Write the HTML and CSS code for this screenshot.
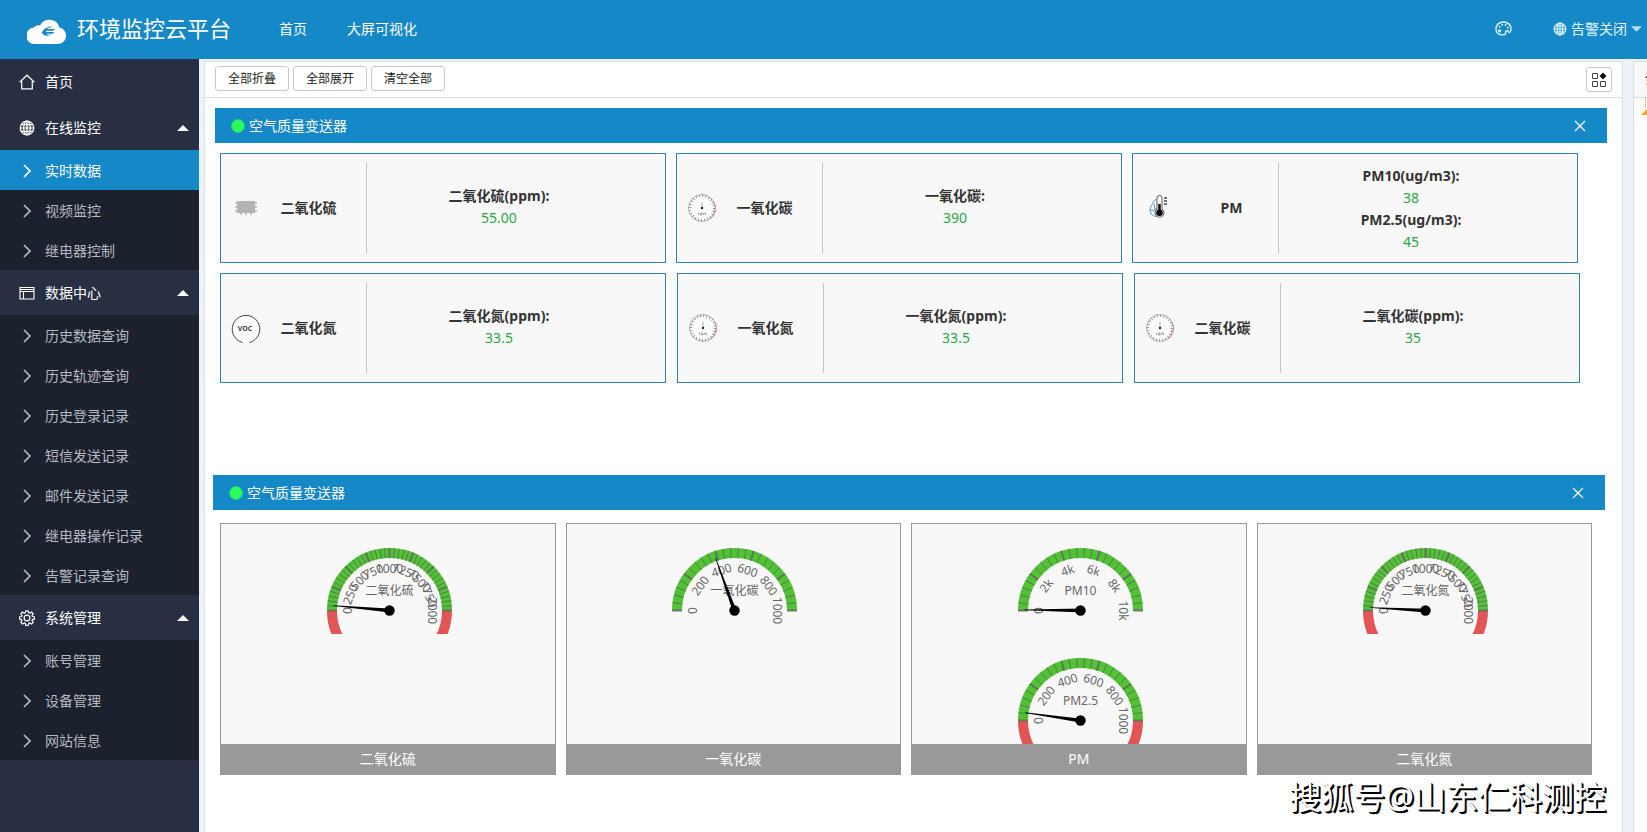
FILE: index.html
```html
<!DOCTYPE html>
<html lang="zh-CN">
<head>
<meta charset="utf-8">
<title>环境监控云平台</title>
<link rel="stylesheet" href="styles.css">
</head>
<body>
<svg class="defs" aria-hidden="true">
  <symbol id="i-chevron" viewBox="0 0 16 16"><path d="M5 2l6 6-6 6" fill="none" stroke="currentColor" stroke-width="1.7"/></symbol>
  <symbol id="i-globe" viewBox="0 0 16 16"><circle cx="8" cy="8" r="7" fill="currentColor" opacity=".15"/><g fill="none" stroke="currentColor" stroke-width="1.2"><circle cx="8" cy="8" r="6.8"/><ellipse cx="8" cy="8" rx="3.3" ry="6.8"/><path d="M8 1.200v13.600M1.200 8h13.600M2.400 4.600h11.200M2.400 11.400h11.200"/></g></symbol>
  <symbol id="i-home" viewBox="0 0 16 16"><path d="M.6 8.300L8 1.200l7.400 7.100M2.700 6.800v8h10.600v-8" fill="none" stroke="currentColor" stroke-width="1.200"/></symbol>
  <symbol id="i-table" viewBox="0 0 16 16"><path d="M1 2.500h14v11.500H1zM1 6.500h14M4.500 6.500V14M1 4.500h14" fill="none" stroke="currentColor" stroke-width="1.100"/></symbol>
  <symbol id="i-gear" viewBox="0 0 16 16"><g fill="none" stroke="currentColor" stroke-width="1.200" stroke-linejoin="round"><path d="M6.700.8h2.600l.4 2 1 .4 1.800-1.200 1.700 1.700-1.200 1.800.4 1 2 .4v2.300l-2 .4-.4 1 1.200 1.800-1.700 1.700-1.800-1.200-1 .4-.4 2H6.700l-.4-2-1-.4-1.800 1.200-1.700-1.700L3 10.600l-.4-1-2-.4V6.900l2-.4.4-1-1.200-1.800L3.500 2l1.800 1.200 1-.4z"/><circle cx="8" cy="8" r="2.900"/></g></symbol>
  <symbol id="i-close" viewBox="0 0 12 12"><path d="M1 1l10 10M11 1L1 11" fill="none" stroke="currentColor" stroke-width="1.300"/></symbol>
  <symbol id="i-caret-up" viewBox="0 0 12 6"><path d="M0 6l6-6 6 6z" fill="currentColor"/></symbol>
  <symbol id="i-dial" viewBox="0 0 30 30"><circle cx="15" cy="15" r="13.500" fill="#fcfcfc" stroke="#999" stroke-width=".8"/><circle cx="15" cy="15" r="12" fill="none" stroke="#777" stroke-width="2" stroke-dasharray=".8 2.340"/><path d="M27.500 10a13.500 13.500 0 0 1-4.500 16" fill="none" stroke="#e08080" stroke-width="1"/><path d="M15 9v6" stroke="#999" stroke-width=".8"/><circle cx="15" cy="15" r="1.200" fill="#222"/><path d="M11.500 19.500v2.500M13.500 20h1.500v2h-1.500zM16.500 22v-2h2v2" fill="none" stroke="#888" stroke-width=".7"/></symbol>
</svg>

<header class="topbar">
  <a class="brand" href="#">
    <svg class="brand-logo" viewBox="0 0 40 26" aria-hidden="true"><path d="M8 26a8 8 0 0 1-1-16.500Q9.500 6.500 13 7.500A10.500 10.500 0 0 1 32.500 9.500 8.400 8.400 0 0 1 32 26z" fill="#fff"/><path d="M15 14.500c1.500-4 6-6.500 11.500-5.500-3 .3-5.500 1-6.500 2h8l-2 1.800h-6.500l-.5 1.200h8.500l-2 1.800h-6c.5 1 2.500 1.300 5.500.7-3.500 2-9.500 1.500-10-2z" fill="#1588c8"/></svg>
    <span class="brand-name">环境监控云平台</span>
  </a>
  <nav class="topnav">
    <a href="#">首页</a>
    <a href="#">大屏可视化</a>
  </nav>
  <div class="tools">
    <button class="tool" type="button" aria-label="主题">
      <svg class="icon-palette" viewBox="0 0 18 16" aria-hidden="true"><path d="M11.500 13.600C9 15.500 1 15.500 1 8.500 1 4 4.500 1 9 1s8 3 8 7.500c0 4-2 4.500-3 2.500-1.200-2-4 0-2.500 2.600z" fill="none" stroke="currentColor" stroke-width="1.500"/><circle cx="4.800" cy="10.500" r="1.700" fill="currentColor"/><circle cx="4.800" cy="6.300" r="1" fill="currentColor"/><circle cx="7.700" cy="4" r="1" fill="currentColor"/><circle cx="11.200" cy="4.200" r="1" fill="currentColor"/><circle cx="13.600" cy="7" r="1" fill="currentColor"/></svg>
    </button>
    <button class="tool tool-alarm" type="button">
      <svg class="icon-small" aria-hidden="true"><use href="#i-globe"/></svg>
      <span>告警关闭</span>
      <svg class="caret-down" viewBox="0 0 12 6" aria-hidden="true"><path d="M0 0h12L6 6z" fill="currentColor"/></svg>
    </button>
  </div>
</header>

<div class="layout">
  <nav class="sidebar">
    <a class="group group-home" href="#"><svg class="icon" aria-hidden="true"><use href="#i-home"/></svg>首页</a>
    <a class="group" href="#"><svg class="icon" aria-hidden="true"><use href="#i-globe"/></svg>在线监控<svg class="caret-up" aria-hidden="true"><use href="#i-caret-up"/></svg></a>
    <div class="submenu">
      <a class="item item-active" href="#"><svg class="icon" aria-hidden="true"><use href="#i-chevron"/></svg>实时数据</a>
      <a class="item" href="#"><svg class="icon" aria-hidden="true"><use href="#i-chevron"/></svg>视频监控</a>
      <a class="item" href="#"><svg class="icon" aria-hidden="true"><use href="#i-chevron"/></svg>继电器控制</a>
    </div>
    <a class="group" href="#"><svg class="icon" aria-hidden="true"><use href="#i-table"/></svg>数据中心<svg class="caret-up" aria-hidden="true"><use href="#i-caret-up"/></svg></a>
    <div class="submenu">
      <a class="item" href="#"><svg class="icon" aria-hidden="true"><use href="#i-chevron"/></svg>历史数据查询</a>
      <a class="item" href="#"><svg class="icon" aria-hidden="true"><use href="#i-chevron"/></svg>历史轨迹查询</a>
      <a class="item" href="#"><svg class="icon" aria-hidden="true"><use href="#i-chevron"/></svg>历史登录记录</a>
      <a class="item" href="#"><svg class="icon" aria-hidden="true"><use href="#i-chevron"/></svg>短信发送记录</a>
      <a class="item" href="#"><svg class="icon" aria-hidden="true"><use href="#i-chevron"/></svg>邮件发送记录</a>
      <a class="item" href="#"><svg class="icon" aria-hidden="true"><use href="#i-chevron"/></svg>继电器操作记录</a>
      <a class="item" href="#"><svg class="icon" aria-hidden="true"><use href="#i-chevron"/></svg>告警记录查询</a>
    </div>
    <a class="group" href="#"><svg class="icon" aria-hidden="true"><use href="#i-gear"/></svg>系统管理<svg class="caret-up" aria-hidden="true"><use href="#i-caret-up"/></svg></a>
    <div class="submenu">
      <a class="item" href="#"><svg class="icon" aria-hidden="true"><use href="#i-chevron"/></svg>账号管理</a>
      <a class="item" href="#"><svg class="icon" aria-hidden="true"><use href="#i-chevron"/></svg>设备管理</a>
      <a class="item" href="#"><svg class="icon" aria-hidden="true"><use href="#i-chevron"/></svg>网站信息</a>
    </div>
  </nav>

  <main class="content">
    <div class="toolbar">
      <button class="btn" type="button">全部折叠</button>
      <button class="btn" type="button">全部展开</button>
      <button class="btn" type="button">清空全部</button>
      <button class="btn btn-view" type="button" aria-label="切换视图">
        <svg class="icon" viewBox="0 0 16 16" aria-hidden="true"><path d="M1.500 1.500h5v5h-5zM1.500 9.500h5v5h-5zM9.500 9.500h5v5h-5z" fill="none" stroke="#444"/><path d="M12 .5L15.500 4 12 7.500 8.500 4z" fill="#111"/></svg>
      </button>
    </div>

    <section class="device">
      <div class="device-bar">
        <span class="dot"></span><h2 class="device-name">空气质量变送器</h2>
        <button class="close" type="button" aria-label="关闭"><svg class="icon-close" aria-hidden="true"><use href="#i-close"/></svg></button>
      </div>
      <div class="cards">
        <article class="card">
          <svg class="card-icon" viewBox="0 0 30 30" aria-hidden="true"><path d="M6 8h18v12H6z" fill="#b4b4b4"/><path d="M4 10h22M4 14h22M4 18h22M10 8v14M15 8v14M20 8v14" stroke="#b4b4b4" stroke-width="1.500"/></svg>
          <h3 class="card-name">二氧化硫</h3>
          <div class="card-values"><b>二氧化硫(ppm):</b><span>55.00</span></div>
        </article>
        <article class="card">
          <svg class="card-icon" aria-hidden="true"><use href="#i-dial"/></svg>
          <h3 class="card-name">一氧化碳</h3>
          <div class="card-values"><b>一氧化碳:</b><span>390</span></div>
        </article>
        <article class="card card-multi">
          <svg class="card-icon" viewBox="0 0 30 30" aria-hidden="true"><path d="M13 6q-6 7-6 11a6 6 0 0 0 8 6M7 17q4 2 7-2M11 11q0 5 3 8" fill="none" stroke="#5a9bd0" stroke-width="1"/><path d="M14 16V5a2.500 2.500 0 0 1 5 0v11a4.500 4.500 0 1 1-5 0z" fill="#fff" stroke="#555"/><path d="M16.500 11v8" stroke="#000" stroke-width="2.400"/><circle cx="16.500" cy="19.800" r="3.300" fill="#000"/><path d="M21 5h3M21 8h3M21 11h3" stroke="#444" stroke-width="1.600"/></svg>
          <h3 class="card-name">PM</h3>
          <div class="card-values"><b>PM10(ug/m3):</b><span>38</span><b>PM2.5(ug/m3):</b><span>45</span></div>
        </article>
      </div>
      <div class="cards cards-wide">
        <article class="card">
          <svg class="card-icon" viewBox="0 0 30 30" aria-hidden="true"><path d="M11.500 29.500A13.800 13.800 0 1 1 18.500 29.500" fill="#fcfcfc" stroke="#444"/><text class="voc" x="14" y="18" text-anchor="middle">VOC</text></svg>
          <h3 class="card-name">二氧化氮</h3>
          <div class="card-values"><b>二氧化氮(ppm):</b><span>33.5</span></div>
        </article>
        <article class="card">
          <svg class="card-icon" aria-hidden="true"><use href="#i-dial"/></svg>
          <h3 class="card-name">一氧化氮</h3>
          <div class="card-values"><b>一氧化氮(ppm):</b><span>33.5</span></div>
        </article>
        <article class="card">
          <svg class="card-icon" aria-hidden="true"><use href="#i-dial"/></svg>
          <h3 class="card-name">二氧化碳</h3>
          <div class="card-values"><b>二氧化碳(ppm):</b><span>35</span></div>
        </article>
      </div>
    </section>

    <section class="device device-charts">
      <div class="device-bar">
        <span class="dot"></span><h2 class="device-name">空气质量变送器</h2>
        <button class="close" type="button" aria-label="关闭"><svg class="icon-close" aria-hidden="true"><use href="#i-close"/></svg></button>
      </div>
      <div class="charts">
        <figure class="chart">
          <div class="chart-body"><svg class="gauge" viewBox="0 0 160 110" data-title="二氧化硫" data-value="55" data-max="2000" data-labels="0,250,500,750,1000,1250,1500,1750,2000" data-alarm="1"></svg></div>
          <figcaption class="chart-name">二氧化硫</figcaption>
        </figure>
        <figure class="chart">
          <div class="chart-body"><svg class="gauge" viewBox="0 0 160 110" data-title="一氧化碳" data-value="390" data-max="1000" data-labels="0,200,400,600,800,1000"></svg></div>
          <figcaption class="chart-name">一氧化碳</figcaption>
        </figure>
        <figure class="chart">
          <div class="chart-body"><svg class="gauge" viewBox="0 0 160 110" data-title="PM10" data-value="38" data-max="10000" data-labels="0,2k,4k,6k,8k,10k"></svg><svg class="gauge" viewBox="0 0 160 110" data-title="PM2.5" data-value="45" data-max="1000" data-labels="0,200,400,600,800,1000" data-alarm="1"></svg></div>
          <figcaption class="chart-name">PM</figcaption>
        </figure>
        <figure class="chart">
          <div class="chart-body"><svg class="gauge" viewBox="0 0 160 110" data-title="二氧化氮" data-value="33.5" data-max="2000" data-labels="0,250,500,750,1000,1250,1500,1750,2000" data-alarm="1"></svg></div>
          <figcaption class="chart-name">二氧化氮</figcaption>
        </figure>
      </div>
    </section>
  </main>

  <aside class="side">
    <div class="side-title">设备列表</div>
    <svg class="side-tree" viewBox="0 0 14 18" aria-hidden="true"><path d="M11.500 0v10" stroke="#c90" stroke-dasharray="1 1"/><path d="M7 17l9-9v9z" fill="#f5a623"/></svg>
  </aside>
</div>
<div class="watermark">搜狐号@山东仁科测控</div>
<script src="gauges.js"></script>
</body>
</html>
```
FILE: styles.css
```css
* { box-sizing: border-box; }

body {
  margin: 0;
  min-height: 100vh;
  display: flex;
  flex-direction: column;
  position: relative;
  overflow-x: hidden;
  background: #edf1f9;
  color: #333;
  font: 14px/22px "Noto Sans", "Noto Sans CJK SC", sans-serif;
}

a { color: inherit; text-decoration: none; }
button { font: inherit; color: inherit; cursor: pointer; }
h2, h3, figure { margin: 0; font-size: 14px; }
svg { display: block; flex: none; }
.defs { position: absolute; width: 0; height: 0; }
.icon { width: 16px; height: 16px; }

.topbar {
  display: flex;
  align-items: center;
  height: 59px;
  padding: 0 5px 4px 27px;
  background: #1588c8;
  color: #fff;
}
.brand { display: flex; align-items: center; gap: 10px; }
.brand-logo { width: 40px; height: 26px; margin-top: 7px; }
.brand-name { font-size: 22px; line-height: 32px; }
.topnav { display: flex; gap: 40px; margin: 2px 0 0 48px; }
.tools { display: flex; align-items: center; gap: 41px; margin: 2px 0 0 auto; }
.tool {
  display: flex;
  align-items: center;
  gap: 4px;
  padding: 0;
  border: 0;
  background: none;
  color: #e3f5ff;
}
.icon-palette { width: 17px; height: 15px; }
.icon-small { width: 14px; height: 14px; }
.caret-down { width: 11px; height: 6px; color: #b4dcf2; }

.layout { flex: 1; display: flex; }

.sidebar { width: 199px; flex: none; background: #282f43; }
.group, .item {
  display: flex;
  align-items: center;
  gap: 10px;
  padding: 0 10px 0 19px;
}
.group { height: 45px; color: #fff; }
.group-home { height: 46px; }
.item { height: 40px; padding-top: 2px; color: #b6b9c0; }
.item-active { background: #1588c8; color: #fff; }
.submenu { background: #1c212e; }
.caret-up { width: 12px; height: 6px; margin-left: auto; }

.content {
  flex: 1;
  min-width: 0;
  margin: 2px 0 0 5px;
  border: 1px solid #dcdfe6;
  border-bottom: 0;
  background: #fff;
}
.toolbar {
  display: flex;
  align-items: center;
  gap: 4px;
  height: 36px;
  padding: 0 10px 2px;
  border-bottom: 1px solid #d8dade;
}
.btn {
  height: 25px;
  padding: 0 12px;
  border: 1px solid #c9c9c9;
  border-radius: 3px;
  background: #fff;
  color: #222;
  font-size: 12px;
  line-height: 22px;
}
.btn-view { margin: 2px 0 0 auto; padding: 0 4px; }

.device { margin: 10px 15px 0 10px; }
.device-charts { margin: 92px 17px 0 8px; }
.device-bar {
  display: flex;
  align-items: center;
  height: 35px;
  padding: 0 21px 0 16px;
  background: #1588c8;
  color: #fff;
}
.dot {
  width: 14px;
  height: 14px;
  margin-right: 4px;
  border: 1px solid #1ed08a;
  border-radius: 50%;
  background: #2cf95c;
}
.device-name { font-weight: 400; }
.close { margin-left: auto; padding: 0; border: 0; background: none; }
.icon-close { width: 12px; height: 12px; }

.cards {
  display: grid;
  grid-template-columns: repeat(3, 1fr);
  gap: 10px;
  margin: 10px 29px 0 5px;
}
.cards-wide { column-gap: 11px; margin-right: 27px; }
.card {
  display: flex;
  align-items: center;
  height: 110px;
  padding: 9px 34px 9px 10px;
  border: 1px solid #2a82b8;
  background: #f8f8f8;
}
.card-icon { width: 30px; height: 30px; }
.card-name { width: 105px; padding-right: 10px; text-align: center; }
.card-values {
  flex: 1;
  align-self: stretch;
  display: flex;
  flex-direction: column;
  justify-content: center;
  padding-bottom: 2px;
  border-left: 1px solid #c4c4c4;
  text-align: center;
}
.card-values span { color: #28a745; }
.card-multi .card-name { padding: 0 0 0 12px; }
.card-multi .card-values { padding: 2px 0 0; }
.voc { font: 700 7px "Noto Sans", sans-serif; fill: #444; }

.charts {
  display: grid;
  grid-template-columns: repeat(4, 1fr);
  gap: 10px;
  margin: 13px 13px 0 7px;
}
.chart { border: 1px solid #999; background: #f8f8f8; }
.chart-body { height: 220px; }
.gauge { width: 160px; height: 110px; margin: 0 auto; overflow: hidden; }
.gauge text { font: 12px "Noto Sans", "Noto Sans CJK SC", sans-serif; fill: #666; }
.chart-name {
  height: 30px;
  padding-top: 4px;
  background: #999;
  color: #fff;
  text-align: center;
}

.side {
  width: 14px;
  flex: none;
  margin: 2px 0 0 10px;
  border: 1px solid #dcdfe6;
  border-width: 1px 0 0 1px;
  background: #fff;
  overflow: hidden;
}
.side-title {
  height: 36px;
  padding: 6px 0 0 11px;
  border-bottom: 1px solid #d8dade;
  background: #f8f8f8;
  font-weight: 700;
  white-space: nowrap;
}
.side-tree { width: 14px; height: 18px; }

.watermark {
  position: absolute;
  right: 41px;
  bottom: 13px;
  color: #fff;
  font-size: 32px;
  line-height: 44px;
  text-shadow: 1px 1px 0 #000, 2px 2px 0 #000;
}
```
FILE: gauges.js
```js
const NS = "http://www.w3.org/2000/svg";
const CX = 81.5, CY = 86.5, OUTER = 62.5, INNER = 52.5, LABEL = 42, NEEDLE = 56;

function point(r, deg) {
  const a = (180 - deg) * Math.PI / 180;
  return [CX + r * Math.cos(a), CY - r * Math.sin(a)];
}

function add(svg, name, attrs, text) {
  const el = document.createElementNS(NS, name);
  for (const key in attrs) el.setAttribute(key, attrs[key]);
  if (text) el.textContent = text;
  svg.appendChild(el);
}

function arc(svg, color, sweep) {
  const r = (OUTER + INNER) / 2;
  add(svg, "path", {
    d: `M${CX - r} ${CY}A${r} ${r} 0 0 ${sweep} ${CX + r} ${CY}`,
    fill: "none", stroke: color, "stroke-width": OUTER - INNER
  });
}

document.querySelectorAll(".gauge").forEach(svg => {
  const { title, value, max, labels, alarm } = svg.dataset;
  const names = labels.split(",");
  const step = 180 / (names.length - 1);

  if (alarm) arc(svg, "#e35454", 0);
  arc(svg, "#4fc332", 1);

  for (let i = 0; i <= (names.length - 1) * 5; i++) {
    const [x1, y1] = point(INNER, i * step / 5);
    const [x2, y2] = point(OUTER, i * step / 5);
    add(svg, "line", { x1, y1, x2, y2, stroke: "#666", "stroke-width": i % 5 ? 1 : 2, opacity: 0.85 });
  }
  names.forEach((name, i) => {
    const [x, y] = point(LABEL, i * step);
    add(svg, "text", {
      "text-anchor": "middle", y: 4,
      transform: `translate(${x} ${y}) rotate(${i * step - 90})`
    }, name);
  });
  add(svg, "text", { x: CX, y: CY - 16, "text-anchor": "middle" }, title);
  add(svg, "path", {
    d: `M${CX + 3} ${CY - 2}L${CX - NEEDLE} ${CY - 0.3}v.6L${CX + 3} ${CY + 2}z`,
    transform: `rotate(${value / max * 180} ${CX} ${CY})`
  });
  add(svg, "circle", { cx: CX, cy: CY, r: 5.2 });
});
```
